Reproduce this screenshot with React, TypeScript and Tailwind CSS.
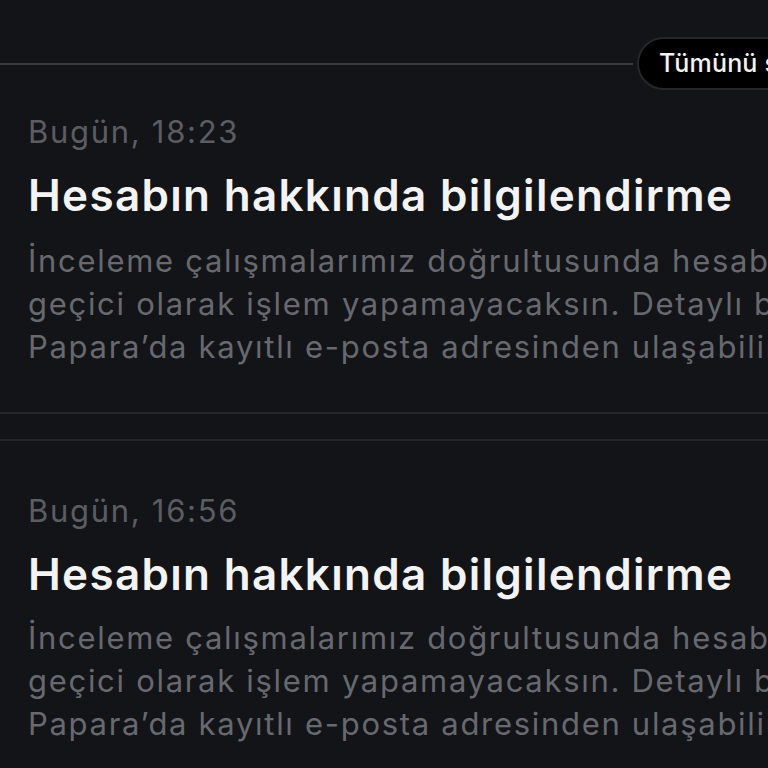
import React from 'react';

const items = [
  { time: 'Bugün, 18:23' },
  { time: 'Bugün, 16:56' },
];

const body = [
  'İnceleme çalışmalarımız doğrultusunda hesabın ile',
  'geçici olarak işlem yapamayacaksın. Detaylı bilgi için',
  'Papara’da kayıtlı e-posta adresinden ulaşabilirsin.',
];

export default function App() {
  return (
    <div
      className="w-[768px] h-[768px] overflow-hidden bg-[#131417]"
      style={{ fontFamily: 'Inter, "Noto Sans", sans-serif' }}
    >
      <div className="w-[1100px]">
        {/* header row */}
        <div className="flex items-center pt-[37px]">
          <div className="w-[633px] h-[2px] bg-[#3a3b40]" />
          <div className="ml-[4px] h-[53px] px-[20px] flex items-center rounded-full bg-black border-2 border-[#26272b]">
            <span className="text-[25px] tracking-[0.2px] text-[#f2f2f2] font-medium">Tümünü sil</span>
          </div>
        </div>

        {items.map((item, i) => (
          <div key={i}>
            <div className={i === 0 ? 'pl-[28px] pt-[22px]' : 'pl-[28px] pt-[50px]'}>
              <p className="text-[31px] leading-[40px] tracking-[1.7px] text-[#5b5d63]">{item.time}</p>
              <p className="mt-[19px] text-[44px] leading-[48px] tracking-[1.3px] font-semibold text-[#f3f3f3]">
                Hesabın hakkında bilgilendirme
              </p>
              <div
                className={
                  i === 0
                    ? 'mt-[20px] text-[31px] leading-[43px] tracking-[1.7px] text-[#67696f]'
                    : 'mt-[18px] text-[31px] leading-[43px] tracking-[1.7px] text-[#67696f]'
                }
              >
                {body.map((l) => (
                  <p key={l} className="whitespace-nowrap">{l}</p>
                ))}
              </div>
            </div>
            {i === 0 && (
              <div className="mt-[44px]">
                <div className="h-[2px] bg-[#25262b]" />
                <div className="h-[25px]" />
                <div className="h-[2px] bg-[#25262b]" />
              </div>
            )}
          </div>
        ))}
      </div>
    </div>
  );
}
